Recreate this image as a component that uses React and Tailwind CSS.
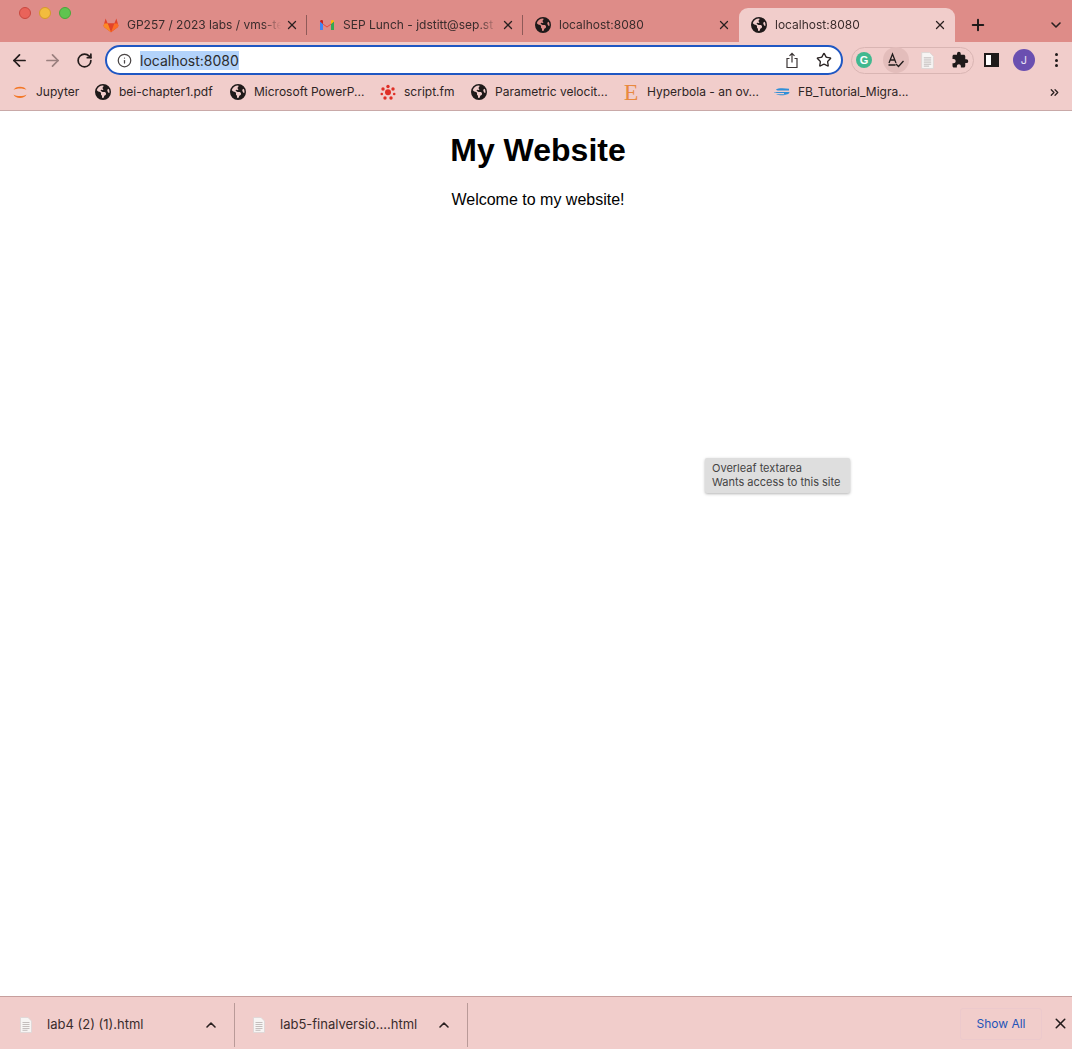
import React from 'react'
import { ArrowLeft, ArrowRight, RotateCw, Info, X, Plus, ChevronDown, ChevronUp, ChevronsRight, Star } from 'lucide-react'
import { FaEarthAmericas } from 'react-icons/fa6'
import { MdExtension } from 'react-icons/md'

function GitlabIcon() {
  return (
    <svg width="16" height="16" viewBox="0 0 16 16" className="shrink-0">
      <path d="M8 15.2 1 10 .6 8.6 2.6 1.6 4.7 6.6h6.6l2.1-5 2 7L15 10z" fill="#e2432a" />
      <path d="M8 15.2 4.7 6.6h6.6z" fill="#e24329" />
      <path d="M8 15.2 4.7 6.6H1.5L.6 8.6 1 10z" fill="#fc6d26" />
      <path d="M8 15.2l3.3-8.6h3.2l.9 2L15 10z" fill="#fc6d26" />
      <path d="M1 10 .6 8.6 1.5 6.6h3.2L8 15.2z" fill="#fca326" opacity=".55" />
    </svg>
  )
}

function GmailIcon() {
  return (
    <svg width="16" height="16" viewBox="0 0 16 16" className="shrink-0">
      <path d="M1 4.5 8 9.5l7-5V13h-3V7.5L8 10.5 4 7.5V13H1z" fill="#ea4335" />
      <path d="M1 4.5V13h3V7z" fill="#4285f4" />
      <path d="M15 4.5V13h-3V7z" fill="#34a853" />
      <path d="M12 7V3.6l1.2-.6c.8-.2 1.8.4 1.8 1.5z" fill="#fbbc04" />
      <path d="M4 7V3.6L2.8 3C2 2.8 1 3.400 1 4.500z" fill="#c5221f" />
    </svg>
  )
}

function JupyterIcon() {
  return (
    <svg width="16" height="16" viewBox="0 0 16 16" className="shrink-0">
      <path d="M1.500 6C3 1.500 13 1.500 14.500 6 11.500 4 4.500 4 1.500 6z" fill="#f37726" />
      <path d="M1.500 10.500C3 15 13 15 14.500 10.500 11.500 12.500 4.500 12.500 1.500 10.500z" fill="#f37726" />
    </svg>
  )
}

function ScriptIcon() {
  const dots = [[8, 2.5, 1.7], [3, 5, 1.7], [13, 5, 1.7], [1.8, 10, 1.3], [14.2, 10, 1.3], [5, 14, 1.7], [11, 14, 1.7]]
  return (
    <svg width="16" height="16" viewBox="0 0 16 16" className="shrink-0">
      <circle cx="8" cy="8.200" r="3" fill="#df2f26" />
      {dots.map(([cx, cy, r]) => (
        <circle key={`${cx}-${cy}`} cx={cx} cy={cy} r={r} fill="#df2f26" />
      ))}
    </svg>
  )
}

function FbIcon() {
  return (
    <svg width="17" height="16" viewBox="0 0 17 16" className="shrink-0">
      <path d="M3 5.500C4.500 4 11 4 16 4.800v1.700H5.500C4.500 6.500 3.500 6.300 3 5.500z" fill="#2f8fd8" />
      <path d="M1 8h15.500c-.4 1.500-1 2-2 2.200H11V8.900H4C2.500 8.900 1.500 8.800 1 8z" fill="#2f8fd8" />
      <path d="M3 10.200h11c-2 1.500-8 1.500-11 0z" fill="#2f8fd8" />
    </svg>
  )
}

function FileIcon({ size = 16 }) {
  return (
    <svg width={size} height={size} viewBox="0 0 16 16" className="shrink-0">
      <path d="M2.500.5h7.500l3.500 3.500v11.500h-11z" fill="#f7f5f4" stroke="#dcd6d5" strokeWidth=".8" />
      <path d="M4.500 5.500h7M4.500 7.500h7M4.500 9.500h7M4.500 11.500h7M4.500 13.300h5" stroke="#bdb8b7" strokeWidth=".9" />
    </svg>
  )
}

function Tab({ icon, title, active, divider }) {
  return (
    <div
      className={`relative flex h-[34px] w-[216px] shrink-0 items-center pl-3 pr-2 ${
        active ? 'rounded-t-[9px] bg-[#f1cdcb]' : 'bg-transparent'
      }`}
    >
      {icon}
      <span className="ml-2 min-w-0 flex-1 whitespace-nowrap text-[12px] text-[#3a2c2c] [mask-image:linear-gradient(to_right,black_88%,transparent)]">
        {title}
      </span>
      <X size={14} strokeWidth={2.2} className="ml-1 shrink-0 text-[#2a2020]" />
      {divider && <span className="absolute right-0 top-[7px] h-[20px] w-px bg-[#8f5a58]" />}
    </div>
  )
}

const globe = <FaEarthAmericas size={16} className="shrink-0 text-[#1f1a1a]" />

const bookmarks = [
  { icon: <JupyterIcon />, label: 'Jupyter', width: 'w-[83px]' },
  { icon: globe, label: 'bei-chapter1.pdf', width: 'w-[135px]' },
  { icon: globe, label: 'Microsoft PowerP...', width: 'w-[150px]' },
  { icon: <ScriptIcon />, label: 'script.fm', width: 'w-[91px]' },
  { icon: globe, label: 'Parametric velocit...', width: 'w-[152px]' },
  {
    icon: <span className="w-4 shrink-0 text-center font-['Liberation_Serif',serif] text-[24px] leading-4 text-[#e8893f]">E</span>,
    label: 'Hyperbola - an ov...',
    width: 'w-[150px]',
  },
  { icon: <FbIcon />, label: 'FB_Tutorial_Migra...', width: 'w-[150px]' },
]

function DownloadItem({ name, width, inset }) {
  return (
    <div className={`flex h-[44px] shrink-0 items-center border-r border-[#b99a98] pr-[15px] ${inset} ${width}`}>
      <FileIcon />
      <span className="ml-[13px] flex-1 whitespace-nowrap text-[13px] text-[#3a2c2c]">{name}</span>
      <ChevronUp size={16} strokeWidth={2.4} className="text-[#2a2020]" />
    </div>
  )
}

export default function App() {
  return (
    <div className="flex h-[1049px] w-[1072px] flex-col overflow-hidden bg-white font-['Inter',sans-serif]">
      {/* tab strip */}
      <div className="flex h-[42px] shrink-0 items-end bg-[#de8c88]">
        <div className="flex h-[34px] w-[91px] shrink-0 items-start gap-2 pl-[19px]">
          <span className="-mt-[1px] h-3 w-3 rounded-full border border-[#c9483f] bg-[#e9635a]" />
          <span className="-mt-[1px] h-3 w-3 rounded-full border border-[#d69a2a] bg-[#f2bc3e]" />
          <span className="-mt-[1px] h-3 w-3 rounded-full border border-[#4aa63b] bg-[#5fc44f]" />
        </div>
        <Tab icon={<GitlabIcon />} title="GP257 / 2023 labs / vms-te" divider />
        <Tab icon={<GmailIcon />} title="SEP Lunch - jdstitt@sep.st" divider />
        <Tab icon={globe} title="localhost:8080" />
        <Tab icon={globe} title="localhost:8080" active />
        <div className="flex h-[34px] flex-1 items-center justify-between pl-[14px] pr-2">
          <Plus size={18} strokeWidth={2.6} className="text-[#1f1a1a]" />
          <ChevronDown size={16} strokeWidth={2.4} className="text-[#2a2020]" />
        </div>
      </div>

      {/* toolbar */}
      <div className="flex h-[36px] shrink-0 items-center bg-[#f1cdcb] pl-[10px]">
        <ArrowLeft size={19} strokeWidth={2.2} className="text-[#231b1b]" />
        <ArrowRight size={19} strokeWidth={2.2} className="ml-[14px] text-[#9a7f7e]" />
        <RotateCw size={17} strokeWidth={2.4} className="ml-[14px] text-[#231b1b]" />
        <div className="ml-[12px] flex h-[30px] w-[738px] shrink-0 items-center rounded-full border-2 border-[#1f57c3] bg-white pl-[10px] pr-[9px]">
          <Info size={15} strokeWidth={2} className="text-[#4a4545]" />
          <span className="ml-[8px] bg-[#b3d3fb] text-[14px] leading-[19px] text-[#2c2c2c]">localhost:8080</span>
          <svg width="16" height="17" viewBox="0 0 16 17" fill="none" stroke="#3c3636" strokeWidth="1.2" className="ml-auto">
            <path d="M5.500 6.500H3v9h10v-9h-2.500M8 10.500V1.500M5.500 3.800 8 1.300l2.500 2.500" />
          </svg>
          <Star size={16} strokeWidth={2} className="ml-4 text-[#2a2424]" />
        </div>
        <div className="ml-2 flex h-[27px] w-[123px] shrink-0 items-center rounded-full border border-[#d9b5b3]">
          <span className="ml-[4px] flex h-4 w-4 items-center justify-center rounded-full bg-[#41b88f] font-['Liberation_Sans',sans-serif] text-[11px] font-bold leading-none text-white">G</span>
          <span className="ml-[11px] flex h-[26px] w-[26px] items-center justify-center rounded-full bg-[#e3bdbb]">
            <svg width="18" height="16" viewBox="0 0 18 16" fill="none" stroke="#1f1a1a" strokeWidth="1.300">
              <path d="M2 11 5.500 2 9 11M3.300 8h4.400M1.500 13h7" />
              <path d="M9 12l2.500 2.500L16.500 9" />
            </svg>
          </span>
          <span className="ml-[10px]">
            <FileIcon size={17} />
          </span>
          <MdExtension size={18} className="ml-[15px] text-[#1f1a1a]" />
        </div>
        <div className="ml-[10px] flex h-[14px] w-[15px] shrink-0 justify-end border-2 border-[#1f1a1a] bg-white">
          <span className="h-full w-[6px] bg-[#1f1a1a]" />
        </div>
        <span className="ml-[14px] flex h-[22px] w-[22px] shrink-0 items-center justify-center rounded-full bg-[#6a4fb0] text-[11px] text-[#e9e4f5]">J</span>
        <div className="ml-[20px] flex flex-col gap-[2.500px]">
          <span className="h-[3px] w-[3px] rounded-full bg-[#1f1a1a]" />
          <span className="h-[3px] w-[3px] rounded-full bg-[#1f1a1a]" />
          <span className="h-[3px] w-[3px] rounded-full bg-[#1f1a1a]" />
        </div>
      </div>

      {/* bookmarks */}
      <div className="flex h-[33px] shrink-0 items-center border-b border-[#c9a9a8] bg-[#f1cdcb] pb-1 pl-3">
        {bookmarks.map((b) => (
          <div key={b.label} className={`flex shrink-0 items-center gap-2 ${b.width}`}>
            {b.icon}
            <span className="whitespace-nowrap text-[12px] text-[#2e2424]">{b.label}</span>
          </div>
        ))}
        <ChevronsRight size={13} strokeWidth={2.4} className="ml-[125px] text-[#2a2020]" />
      </div>

      {/* page */}
      <main className="relative flex-1 bg-white pl-1 text-center font-['Liberation_Sans',sans-serif] text-black">
        <h1 className="mt-[21px] text-[32px] font-bold leading-[37px]">My Website</h1>
        <p className="mt-[22px] text-base leading-[18px]">Welcome to my website!</p>
        <div className="absolute left-[705px] top-[347px] h-[35px] w-[145px] rounded-[2px] bg-[#dedede] px-[7px] pt-[3px] text-left font-['Inter',sans-serif] text-[11px] leading-[14px] text-[#444] shadow-[0_1px_3px_rgba(0,0,0,0.3)]">
          <div>Overleaf textarea</div>
          <div className="whitespace-nowrap">Wants access to this site</div>
        </div>
      </main>

      {/* downloads bar */}
      <div className="flex h-[53px] shrink-0 items-start border-t border-[#c79f9d] bg-[#f1cdcb] pt-[6px]">
        <DownloadItem name="lab4 (2) (1).html" width="w-[235px]" inset="pl-[18px]" />
        <DownloadItem name="lab5-finalversio....html" width="w-[233px]" inset="pl-4" />
        <div className="ml-auto mt-[5px] flex h-[32px] w-[82px] items-center justify-center rounded-[3px] border border-[#ecc9cc] text-[12px] text-[#2454b8]">
          Show All
        </div>
        <X size={17} strokeWidth={2.2} className="ml-[10px] mr-[3px] mt-[12px] text-[#231b1b]" />
      </div>
    </div>
  )
}
